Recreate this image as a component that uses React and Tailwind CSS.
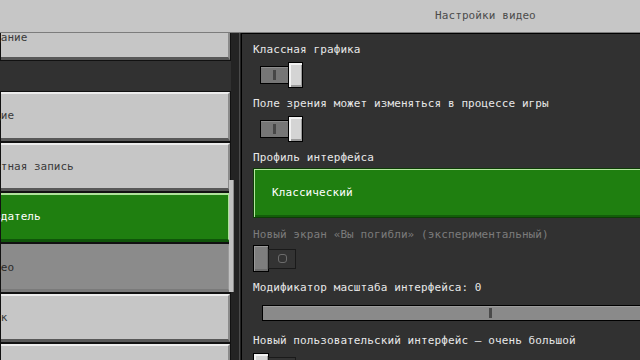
import React from "react";

const FONT = "font-['DejaVu_Sans_Mono','Liberation_Mono',monospace]";

function NavButton({ label, variant = "gray", h = "h-[50px]" }) {
  const styles = {
    gray: "bg-[#c6c6c6] border-t-2 border-t-[#ececec] border-b-[3px] border-b-[#585858] border-r-2 border-r-[#8b8b8b] text-[#3a3a3a]",
    green: "bg-[#1f7f10] border-t-2 border-t-[#aee29a] border-b-[3px] border-b-[#10550a] border-r-2 border-r-[#aee29a] text-[#ffffff]",
    selected: "bg-[#8b8b8b] border-t-2 border-t-[#8b8b8b] border-b-[3px] border-b-[#7a7a7a] border-r-2 border-r-[#9a9a9a] text-[#2a2a2a]",
  };
  return (
    <div className={`${h} shrink-0 border border-[#111] w-[231px]`}>
      <div className={`h-full flex items-center ${styles[variant]}`}>
        <span className="ml-[-20px] whitespace-nowrap">{label}</span>
      </div>
    </div>
  );
}

function ToggleOn() {
  return (
    <div className="flex items-center h-[26px] ml-[7px]">
      <div className="w-[29px] h-[18px] bg-[#767676] border border-black flex items-center justify-center shadow-[inset_0_1px_0_#8e8e8e]">
        <div className="w-[3px] h-[10px] bg-[#474747]" />
      </div>
      <div className="w-[15px] h-[26px] -ml-px border border-black bg-[#d4d4d4] shadow-[inset_2px_2px_0_#f2f2f2,inset_-1px_-2px_0_#9a9a9a]" />
    </div>
  );
}

function ToggleOffDisabled({ light = false }) {
  return (
    <div className="flex items-center h-[27px]">
      <div
        className={`w-[16px] h-[27px] border border-black ${
          light
            ? "bg-[#d4d4d4] shadow-[inset_2px_2px_0_#f2f2f2,inset_-1px_-2px_0_#9a9a9a]"
            : "bg-[#7e7e7e] shadow-[inset_1px_1px_0_#9a9a9a,inset_-1px_-2px_0_#6a6a6a]"
        }`}
      />
      <div className="w-[28px] h-[20px] -ml-px border border-[#1a1a1a] bg-[#333333] flex items-center justify-center">
        <div className="w-[9px] h-[9px] rounded-[3px] border border-[#6c6c6c]" />
      </div>
    </div>
  );
}

export default function App() {
  return (
    <div className={`w-[640px] h-[360px] overflow-hidden bg-[#313131] flex flex-col text-[11px] leading-[14px] ${FONT}`}>
      {/* header */}
      <div className="h-[33px] shrink-0 bg-[#c6c6c6] border-b border-b-[#7c7c7c] flex items-center relative z-10">
        <span className="ml-[435px] text-[#4c4c4c] tracking-[0.1px]">Настройки видео</span>
      </div>

      <div className="flex flex-1 min-h-0">
        {/* left nav */}
        <div className="w-[241px] shrink-0 flex overflow-hidden">
          <div className="w-[231px] shrink-0 flex flex-col -mt-[18px]">
            <NavButton label="Задание" h="h-[46px]" />
            <div className="h-[30px] shrink-0" />
            <NavButton label="Общие" h="h-[51px]" />
            <NavButton label="Учётная запись" />
            <NavButton label="Создатель" variant="green" h="h-[51px]" />
            <NavButton label="Видео" variant="selected" />
            <NavButton label="Звук" />
            <NavButton label="Язык" />
          </div>
          <div className="w-[10px] shrink-0 bg-[#232323] flex flex-col relative">
            <div className="absolute left-[-2px] top-[147px] w-[5px] h-[112px] bg-[#c2c2c2] border-r border-[#8b8b8b]" />
            <div className="absolute right-[1px] top-0 bottom-0 w-px bg-[#4a4a4a]" />
          </div>
        </div>

        {/* right panel */}
        <div className="flex-1 min-w-0 overflow-hidden border-l border-t border-black pl-[11px] pt-[9px] text-[#e8e8e8] tracking-[0.1px]">
          <div className="whitespace-nowrap">Классная графика</div>
          <div className="mt-[5px]"><ToggleOn /></div>
          <div className="mt-[9px] whitespace-nowrap">Поле зрения может изменяться в процессе игры</div>
          <div className="mt-[5px]"><ToggleOn /></div>
          <div className="mt-[9px] whitespace-nowrap">Профиль интерфейса</div>
          <div className="mt-[3px] w-[420px] h-[50px] border border-[#0d3d06] bg-[#1f7f10] shadow-[inset_1px_1px_0_#b4e8a0,inset_-1px_-2px_0_#135e0a] flex items-center">
            <span className="ml-[18px] text-white">Классический</span>
          </div>
          <div className="mt-[10px] whitespace-nowrap text-[#7c7c7c]">Новый экран «Вы погибли» (экспериментальный)</div>
          <div className="mt-[3px]"><ToggleOffDisabled /></div>
          <div className="mt-[9px] whitespace-nowrap">Модификатор масштаба интерфейса: 0</div>
          <div className="mt-[10px] ml-[9px] w-[420px] h-[16px] border border-black bg-[#8a8a8a] shadow-[inset_0_1px_0_#9c9c9c] relative">
            <div className="absolute left-[226px] top-[2px] w-[3px] h-[10px] bg-[#4a4a4a]" />
          </div>
          <div className="mt-[13px] whitespace-nowrap">Новый пользовательский интерфейс – очень большой</div>
          <div className="mt-[5px]"><ToggleOffDisabled light /></div>
        </div>
      </div>
    </div>
  );
}
